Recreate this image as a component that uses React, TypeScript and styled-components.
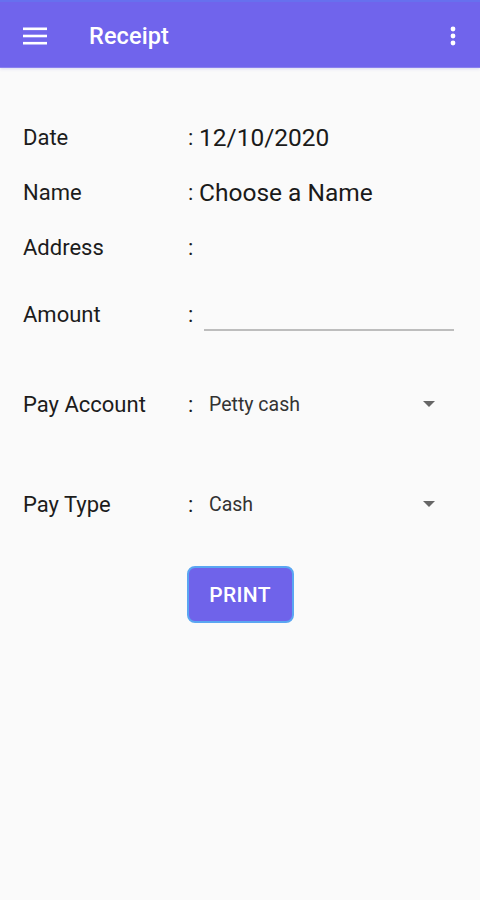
import styled, { createGlobalStyle } from 'styled-components';

const GlobalStyle = createGlobalStyle`
  html, body {
    margin: 0;
    padding: 0;
    background: #fafafa;
  }
  body {
    font-family: Roboto, "Liberation Sans", Arial, sans-serif;
  }
`;

export default function App() {
  return (
    <>
      <GlobalStyle />
      <Screen>
        <AppBar>
          <IconButton aria-label="menu">
            <svg width="24" height="24" viewBox="0 0 24 24">
              <rect x="0" y="3.5" width="24" height="2.6" fill="#fff" />
              <rect x="0" y="10.7" width="24" height="2.6" fill="#fff" />
              <rect x="0" y="17.9" width="24" height="2.6" fill="#fff" />
            </svg>
          </IconButton>
          <Title>Receipt</Title>
          <MoreButton aria-label="more">
            <svg width="6" height="20" viewBox="0 0 6 20">
              <circle cx="3" cy="3" r="2.4" fill="#fff" />
              <circle cx="3" cy="10" r="2.4" fill="#fff" />
              <circle cx="3" cy="17" r="2.4" fill="#fff" />
            </svg>
          </MoreButton>
        </AppBar>

        <Form>
          <Row $height={55}>
            <Label>Date</Label>
            <Colon>:</Colon>
            <Value>12/10/2020</Value>
          </Row>
          <Row $height={55}>
            <Label>Name</Label>
            <Colon>:</Colon>
            <Value>Choose a Name</Value>
          </Row>
          <Row $height={55}>
            <Label>Address</Label>
            <Colon>:</Colon>
            <Value />
          </Row>
          <Row $height={78}>
            <Label>Amount</Label>
            <Colon>:</Colon>
            <AmountInput />
          </Row>
          <Row $height={102}>
            <Label>Pay Account</Label>
            <Colon>:</Colon>
            <Select>
              <span>Petty cash</span>
              <Caret />
            </Select>
          </Row>
          <Row $height={98}>
            <Label>Pay Type</Label>
            <Colon>:</Colon>
            <Select>
              <span>Cash</span>
              <Caret />
            </Select>
          </Row>
          <Actions>
            <PrintButton>PRINT</PrintButton>
          </Actions>
        </Form>
      </Screen>
    </>
  );
}

const Screen = styled.div`
  width: 480px;
  min-height: 900px;
  background: #fafafa;
`;

const AppBar = styled.header`
  height: 68px;
  box-sizing: border-box;
  border-top: 2px solid #6770ee;
  border-bottom: 1px solid #8a80ee;
  background: #7064ec;
  display: flex;
  align-items: center;
  padding: 2px 18px 0 23px;
  box-shadow: 0 1px 3px rgba(80, 70, 200, 0.18);
`;

const IconButton = styled.div`
  display: flex;
  align-items: center;
  width: 24px;
  height: 24px;
`;

const Title = styled.h1`
  margin: 0 0 0 42px;
  flex: 1;
  color: #fff;
  font-size: 23.5px;
  font-weight: 500;
  letter-spacing: 0.1px;
`;

const MoreButton = styled.div`
  display: flex;
  align-items: center;
  padding-right: 6px;
`;

const Form = styled.main`
  padding: 42px 26px 0 23px;
`;

const Row = styled.div<{ $height: number }>`
  display: grid;
  grid-template-columns: 165px 11px 1fr;
  align-items: center;
  height: ${(p) => p.$height}px;
`;

const Label = styled.span`
  font-size: 22px;
  color: #1c1c1c;
`;

const Colon = styled.span`
  font-size: 22px;
  color: #1c1c1c;
`;

const Value = styled.span`
  font-size: 24.5px;
  color: #1a1a1a;
`;

const AmountInput = styled.div`
  align-self: start;
  margin: 54px 0 0 5px;
  height: 0;
  border-bottom: 2px solid #bdbdbd;
`;

const Select = styled.div`
  display: flex;
  align-items: center;
  justify-content: space-between;
  padding: 0 19px 0 10px;
  font-size: 19.5px;
  color: #333;
`;

const Caret = styled.span`
  width: 0;
  height: 0;
  border-left: 6px solid transparent;
  border-right: 6px solid transparent;
  border-top: 6px solid #666;
`;

const Actions = styled.div`
  display: flex;
  justify-content: center;
  padding-top: 13px;
  margin-left: -23px;
  margin-right: -26px;
`;

const PrintButton = styled.button`
  width: 107px;
  height: 57px;
  border-radius: 8px;
  border: 2px solid #5aa6f2;
  background: #6f63ea;
  color: #fff;
  font-family: Roboto, "Liberation Sans", Arial, sans-serif;
  font-size: 21px;
  font-weight: 500;
  letter-spacing: 0.3px;
`;
